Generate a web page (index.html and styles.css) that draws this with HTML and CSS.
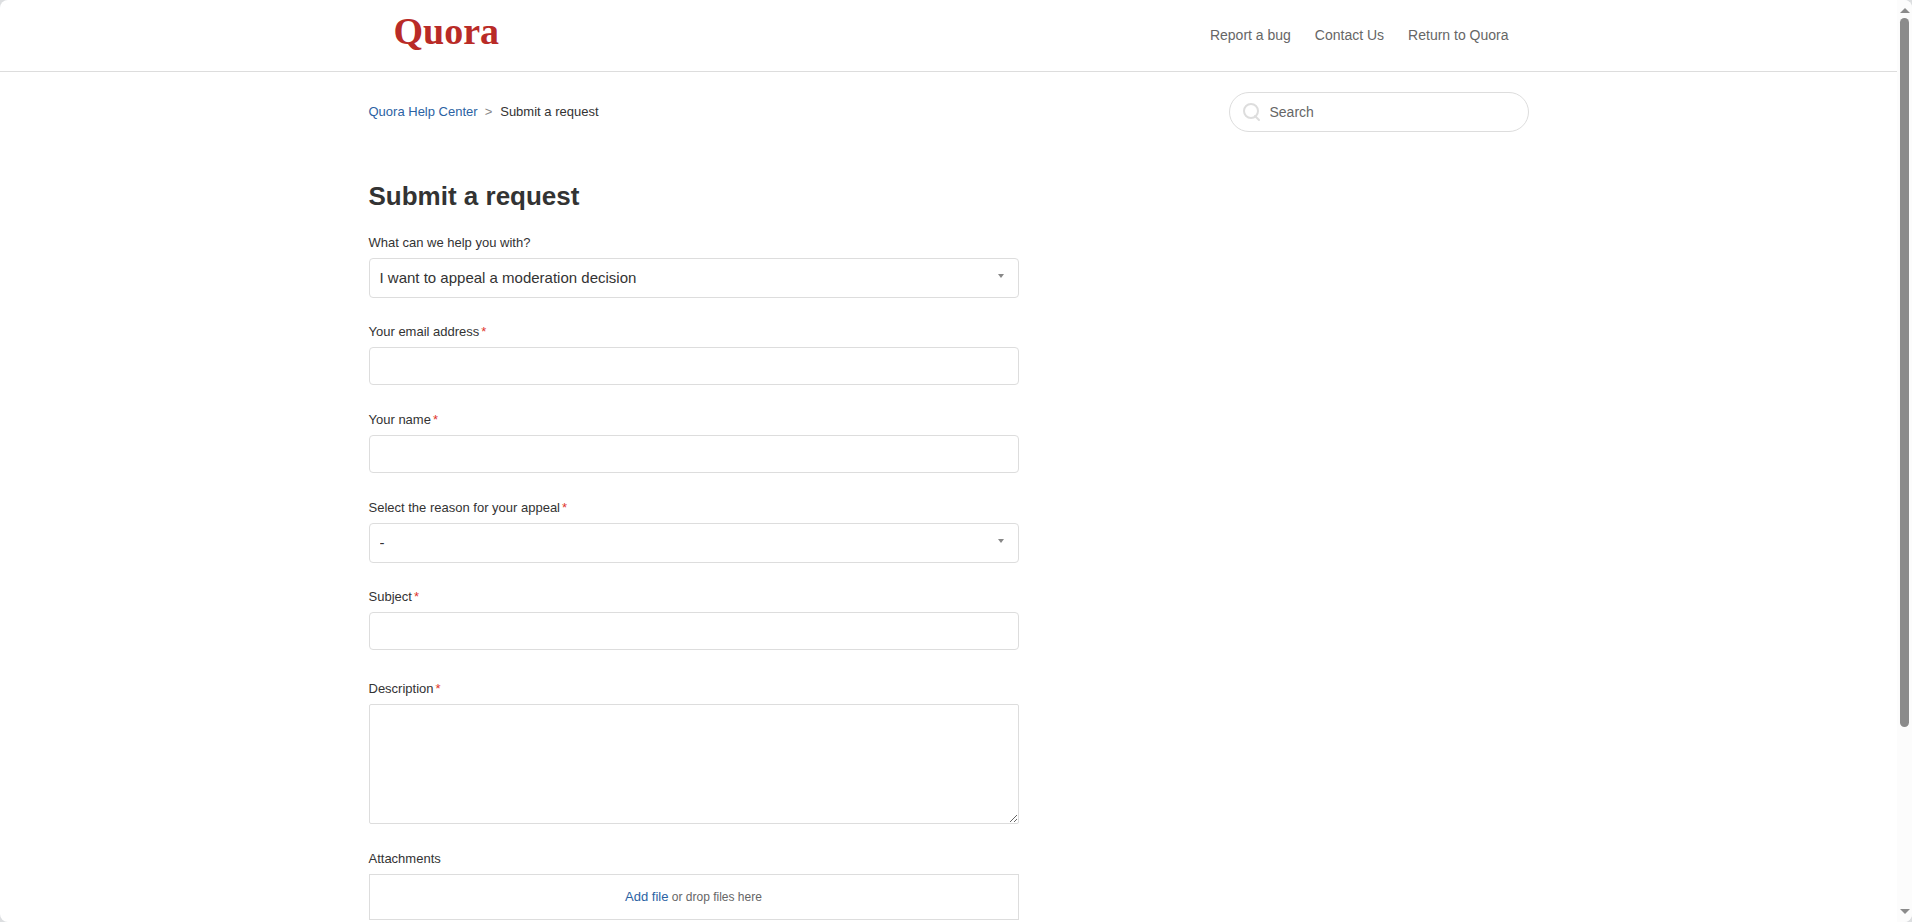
FILE: index.html
```html
<!DOCTYPE html>
<html lang="en">
<head>
  <meta charset="UTF-8" />
  <title>Submit a request</title>
  <link rel="stylesheet" href="styles.css">
</head>
<body>
  <div class="window">
    <div class="page">
      <header class="header">
        <div class="header-inner">
          <a class="logo" href="#">Quora</a>
          <nav class="nav">
            <a href="#">Report a bug</a>
            <a href="#">Contact Us</a>
            <a href="#">Return to Quora</a>
          </nav>
        </div>
      </header>

      <main class="container">
        <div class="sub-nav">
          <ol class="breadcrumbs">
            <li><a href="#">Quora Help Center</a></li>
            <li>Submit a request</li>
          </ol>
          <form class="search">
            <svg class="search-icon" width="20" height="20" viewBox="0 0 20 20" fill="none" stroke="#ddd" stroke-width="2">
              <circle cx="8" cy="8" r="7" />
              <path d="M12 13 L16 17" stroke-linecap="round" />
            </svg>
            <input type="search" placeholder="Search" aria-label="Search">
          </form>
        </div>

        <h1>Submit a request</h1>

        <form class="request-form" id="requestForm">
          <div class="field select-field">
            <label for="topic">What can we help you with?</label>
            <div class="select-box">
              <select id="topic">
                <option>I want to appeal a moderation decision</option>
              </select>
            </div>
          </div>

          <div class="field">
            <label for="email" class="required">Your email address</label>
            <input type="email" id="email" required>
          </div>

          <div class="field">
            <label for="name" class="required">Your name</label>
            <input type="text" id="name" required>
          </div>

          <div class="field select-field">
            <label for="reason" class="required">Select the reason for your appeal</label>
            <div class="select-box">
              <select id="reason" required>
                <option>-</option>
              </select>
            </div>
          </div>

          <div class="field">
            <label for="subject" class="required">Subject</label>
            <input type="text" id="subject" required>
          </div>

          <div class="field description">
            <label for="description" class="required">Description</label>
            <textarea id="description" required></textarea>
          </div>

          <div class="field attachments">
            <label for="files">Attachments</label>
            <div class="upload">
              <input type="file" id="files" multiple>
              <p><a href="#">Add file</a> or drop files here</p>
            </div>
          </div>
        </form>
      </main>
    </div>

    <div class="scrollbar">
      <span class="arrow up"></span>
      <div class="track">
        <div class="thumb"></div>
      </div>
      <span class="arrow down"></span>
    </div>
  </div>
</body>
</html>
```

FILE: styles.css
```css
* {
  box-sizing: border-box;
}
html {
  background: #dcdee0;
}
body {
  margin: 0;
  font-family: Arial, "Liberation Sans", sans-serif;
  font-size: 13px;
  line-height: 20px;
  color: #333;
}
a {
  color: #2b62a3;
  text-decoration: none;
}
.window {
  display: flex;
  min-height: 100vh;
  background: white;
  border-radius: 8px;
  overflow: hidden;
}
.page {
  flex: 1;
  min-width: 0;
}

/* header */
.header {
  border-bottom: 1px solid #ddd;
}
.header-inner {
  display: flex;
  align-items: center;
  justify-content: space-between;
  max-width: 1160px;
  height: 71px;
  margin: 0 auto;
  padding: 0 20px 0 25px;
}
.logo {
  font-family: "Liberation Serif", serif;
  font-size: 38px;
  font-weight: bold;
  line-height: 40px;
  padding-bottom: 10px;
  color: #b92b27;
}
.nav {
  display: flex;
  gap: 24px;
  padding-bottom: 2px;
  font-size: 14px;
}
.nav a {
  color: #666;
}

.container {
  max-width: 1160px;
  margin: 0 auto;
  padding: 20px 0 1px;
}
.sub-nav {
  display: flex;
  align-items: center;
  justify-content: space-between;
}
.breadcrumbs {
  display: flex;
  margin: 0;
  padding: 0;
  list-style: none;
}
.breadcrumbs li + li::before {
  content: ">";
  margin: 0 8px 0 7px;
  color: #888;
}
.search {
  position: relative;
  width: 300px;
}
.search input {
  display: block;
  width: 100%;
  height: 40px;
  padding: 0 20px 0 40px;
  border: 1px solid #ddd;
  border-radius: 20px;
  font: inherit;
  font-size: 14px;
  outline: none;
  appearance: none;
}
.search input::placeholder {
  color: #666;
}
.search-icon {
  position: absolute;
  top: 11px;
  left: 14px;
}

/* form */
h1 {
  margin: 48px 0 21px;
  font-size: 26px;
  line-height: 32px;
}
.request-form {
  max-width: 650px;
}
.field {
  margin-bottom: 25px;
}
.select-field {
  margin-bottom: 24px;
}
.field label {
  display: block;
  margin-bottom: 5px;
}
.required::after {
  content: "*";
  margin-left: 2px;
  color: #e0352b;
}
.field input,
.field select,
.field textarea {
  display: block;
  width: 100%;
  height: 38px;
  padding: 0 10px;
  border: 1px solid #ddd;
  border-radius: 4px;
  background: white;
  font: inherit;
  font-size: 15px;
  color: #333;
  outline: none;
  appearance: none;
}
.field select {
  height: 40px;
}
.select-box {
  position: relative;
}
.select-box::after {
  content: "";
  position: absolute;
  top: 16px;
  right: 15px;
  border: 3px solid transparent;
  border-top: 4px solid #888;
  border-bottom: 0;
  pointer-events: none;
}
.description {
  margin-top: 29px;
}
.field textarea {
  height: 120px;
  padding: 10px;
  border-radius: 2px;
  resize: vertical;
}
.attachments {
  margin-bottom: 0;
}
.upload {
  position: relative;
  padding: 12px;
  border: 1px solid #ddd;
  text-align: center;
  font-size: 12px;
  color: #666;
}
.upload input {
  position: absolute;
  inset: 0;
  height: 100%;
  opacity: 0;
}
.upload p {
  margin: 0;
}
.upload a {
  font-size: 13px;
}

/* scrollbar */
.scrollbar {
  display: flex;
  flex-direction: column;
  align-items: center;
  width: 15px;
  padding: 8px 0;
  background: #fcfcfc;
}
.arrow {
  border: 5px solid transparent;
}
.up {
  border-top: 0;
  border-bottom-color: #8b8b8b;
}
.down {
  border-bottom: 0;
  border-top-color: #8b8b8b;
}
.track {
  flex: 1;
  width: 9px;
  margin: 5px 0;
}
.thumb {
  height: 80%;
  border-radius: 5px;
  background: #8b8b8b;
}
```
